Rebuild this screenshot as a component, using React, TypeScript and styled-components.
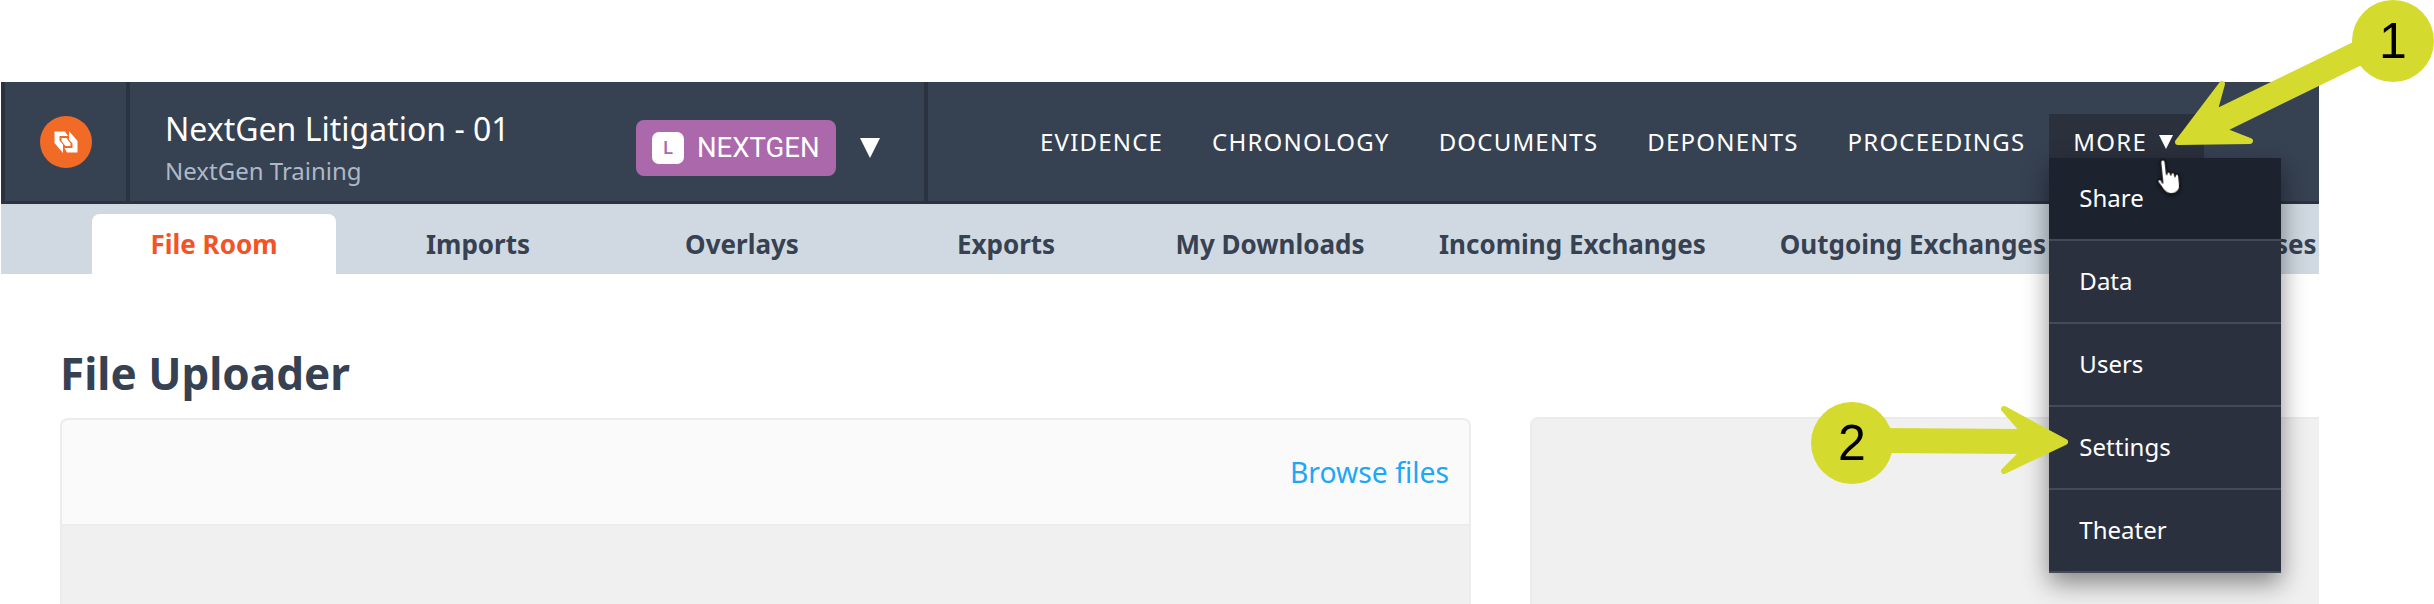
import { FC } from 'react'
import styled, { createGlobalStyle } from 'styled-components'

const navLinks = ['EVIDENCE', 'CHRONOLOGY', 'DOCUMENTS', 'DEPONENTS', 'PROCEEDINGS']
const tabs = ['File Room', 'Imports', 'Overlays', 'Exports', 'My Downloads', 'Incoming Exchanges', 'Outgoing Exchanges', 'Load Processes']
const menuItems = ['Share', 'Data', 'Users', 'Settings', 'Theater']

const App: FC = () => {
  return (
    <>
      <GlobalStyle />
      <Page>
        <Frame>
          <Header>
            <LogoCell>
              <Logo viewBox="0 0 52 52">
                <circle cx="26" cy="26" r="26" fill="#f26b26" />
                <path d="M14.5 15.5 L25 15.5 L28 20 L19.5 20 L19.5 24.5 L23 28.5 L23 37 L14.5 27 Z" fill="#fff" />
                <path d="M37.5 36.5 L27 36.5 L24.5 32 L32.5 32 L32.5 27.5 L29 23.5 L29 15 L37.5 25 Z" fill="#fff" />
                <path d="M21.5 22 L26.5 22 L30.5 27.5 L30.5 30 L25.5 30 L21.5 25 Z" fill="#fff" />
              </Logo>
            </LogoCell>
            <ProjectCell>
              <ProjectText>
                <ProjectTitle>NextGen Litigation - 01</ProjectTitle>
                <ProjectSub>NextGen Training</ProjectSub>
              </ProjectText>
              <Badge>
                <BadgeMark>L</BadgeMark>
                NEXTGEN
              </Badge>
              <Caret $size={10} $gap={24} />
            </ProjectCell>
            <Nav>
              {navLinks.map((link) => (
                <NavLink key={link}>{link}</NavLink>
              ))}
              <MoreWrap>
                <MoreButton>
                  MORE
                  <Caret $size={7} $gap={12} />
                </MoreButton>
                <Menu>
                  {menuItems.map((item, i) => (
                    <MenuItem key={item} $active={i === 0}>
                      {item}
                    </MenuItem>
                  ))}
                </Menu>
              </MoreWrap>
            </Nav>
          </Header>
          <TabBar>
            {tabs.map((tab, i) => (
              <Tab key={tab} $active={i === 0}>
                {tab}
              </Tab>
            ))}
          </TabBar>
          <Content>
            <LeftColumn>
              <Heading>File Uploader</Heading>
              <Card>
                <CardHeader>
                  <BrowseLink>Browse files</BrowseLink>
                </CardHeader>
                <CardBody />
              </Card>
            </LeftColumn>
            <SidePanel />
          </Content>
        </Frame>

        <Arrows viewBox="0 0 2434 604">
          <path
            d="M2178 142 L2222 84 L2214 113 L2352 46 L2359 63 L2222 130 L2250 141 Z"
            fill="#d5da2e"
            stroke="#d5da2e"
            strokeWidth="6"
            strokeLinejoin="round"
          />
          <path
            d="M1885 431 L2024 432 L2004 409 L2065 442 L2004 471 L2024 451 L1885 450 Z"
            fill="#d5da2e"
            stroke="#d5da2e"
            strokeWidth="6"
            strokeLinejoin="round"
          />
        </Arrows>
        <Marker $left={2352} $top={0}>1</Marker>
        <Marker $left={1811} $top={402}>2</Marker>
        <Hand viewBox="0 0 30 38">
          <path
            d="M7 24 L7 4 C7 0 12 0 12 4 L12 16 C12 13 16 13 16 16 L16 17 C16 14 20 14 20 17 L20 19 C20 16 24 16 24 19 L24 27 C24 33 20 36 15 36 C11 36 9 34 7 31 L3 24 C1 21 4 19 6 21 Z"
            fill="#fff"
            stroke="#111"
            strokeWidth="1.6"
            strokeLinejoin="round"
          />
        </Hand>
      </Page>
    </>
  )
}

const GlobalStyle = createGlobalStyle`
  html, body {
    margin: 0;
    padding: 0;
    background: #fff;
  }

  body {
    font-family: 'Noto Sans', sans-serif;
  }
`

const Page = styled.div`
  position: relative;
  width: 2434px;
  height: 604px;
  overflow: hidden;
  background: #fff;
  padding-top: 82px;
  box-sizing: border-box;
`

const Frame = styled.div`
  width: 2318px;
  height: 522px;
  margin-left: 1px;
  overflow: hidden;
  display: flex;
  flex-direction: column;
`

const Header = styled.div`
  display: flex;
  flex-shrink: 0;
  height: 119px;
  background: #364152;
  border-bottom: 3px solid #2b3240;
`

const LogoCell = styled.div`
  width: 121px;
  display: flex;
  align-items: center;
  justify-content: center;
  border-left: 4px solid #2b3240;
  border-right: 4px solid #2b3240;
`

const Logo = styled.svg`
  width: 52px;
  height: 52px;
`

const ProjectCell = styled.div`
  width: 759px;
  display: flex;
  align-items: center;
  padding: 12px 0 0 35px;
  border-right: 4px solid #2b3240;
`

const ProjectText = styled.div`
  width: 471px;
`

const ProjectTitle = styled.div`
  font-size: 32px;
  line-height: 40px;
  color: #fff;
`

const ProjectSub = styled.div`
  margin-top: 6px;
  font-size: 24px;
  line-height: 32px;
  color: #aeb8c6;
`

const Badge = styled.div`
  width: 200px;
  height: 56px;
  display: flex;
  align-items: center;
  gap: 13px;
  padding-left: 16px;
  box-sizing: border-box;
  border-radius: 8px;
  background: #ab68ab;
  color: #fff;
  font-family: Roboto, sans-serif;
  font-size: 27.5px;
`

const BadgeMark = styled.span`
  width: 32px;
  height: 32px;
  display: flex;
  align-items: center;
  justify-content: center;
  border-radius: 7px;
  background: #fff;
  color: #ab68ab;
  font-size: 18px;
  font-weight: 500;
`

const Caret = styled.span<{ $size: number; $gap: number }>`
  width: 0;
  height: 0;
  margin-left: ${(props) => props.$gap}px;
  border-left: ${(props) => props.$size}px solid transparent;
  border-right: ${(props) => props.$size}px solid transparent;
  border-top: ${(props) => props.$size * 2}px solid #fff;
`

const Nav = styled.div`
  flex: 1;
  display: flex;
  align-items: center;
  padding-left: 112px;
  gap: 49px;
  font-size: 24px;
  letter-spacing: 1.2px;
  color: #fff;
`

const NavLink = styled.span`
  white-space: nowrap;
`

const MoreWrap = styled.div`
  position: relative;
  margin: 0 0 12px -25px;
`

const MoreButton = styled.div`
  width: 155px;
  height: 44px;
  padding: 12px 0 0 24px;
  box-sizing: border-box;
  display: flex;
  align-items: center;
  background: #2b303d;
`

const Menu = styled.div`
  position: absolute;
  top: 44px;
  left: 0;
  width: 232px;
  z-index: 2;
  background: #2a303e;
  box-shadow: 0 10px 24px rgba(0, 0, 0, 0.45);
  font-size: 24px;
  letter-spacing: 0;
`

const MenuItem = styled.div<{ $active: boolean }>`
  height: 79px;
  padding: 0 0 2px 30px;
  display: flex;
  align-items: center;
  background: ${(props) => (props.$active ? '#1c222e' : '#2a303e')};
  border-bottom: 2px solid #434a5a;
  color: #fff;
`

const TabBar = styled.div`
  height: 70px;
  flex-shrink: 0;
  display: flex;
  align-items: flex-end;
  gap: 20px;
  padding-left: 91px;
  background: #d0d9e1;
  overflow: hidden;
`

const Tab = styled.div<{ $active: boolean }>`
  min-width: 244px;
  height: 60px;
  padding: 0 27px;
  box-sizing: border-box;
  flex-shrink: 0;
  display: flex;
  align-items: center;
  justify-content: center;
  border-radius: 8px 8px 0 0;
  background: ${(props) => (props.$active ? '#fff' : 'transparent')};
  color: ${(props) => (props.$active ? '#f35325' : '#364152')};
  font-size: 26px;
  font-weight: 700;
  white-space: nowrap;
`

const Content = styled.div`
  flex: 1;
  display: flex;
  gap: 59px;
  padding-left: 59px;
`

const LeftColumn = styled.div`
  width: 1411px;
  flex-shrink: 0;
`

const Heading = styled.h1`
  margin: 70px 0 0;
  height: 74px;
  font-size: 44px;
  line-height: 58px;
  font-weight: 700;
  color: #364152;
`

const Card = styled.div`
  height: 300px;
  border: 2px solid #ececec;
  border-radius: 8px 8px 0 0;
  overflow: hidden;
  background: #f0f0f0;
`

const CardHeader = styled.div`
  height: 104px;
  padding-right: 20px;
  display: flex;
  align-items: center;
  justify-content: flex-end;
  background: #fafafa;
  border-bottom: 2px solid #ececec;
`

const BrowseLink = styled.span`
  font-size: 28.3px;
  color: #1ea7f5;
`

const CardBody = styled.div`
  height: 100%;
`

const SidePanel = styled.div`
  flex: 1;
  margin-top: 143px;
  background: #f0f0f0;
  border-top: 2px solid #ebebeb;
  border-left: 2px solid #ececec;
  border-radius: 8px 0 0 0;
`

const Arrows = styled.svg`
  position: absolute;
  inset: 0;
  width: 2434px;
  height: 604px;
  z-index: 3;
  pointer-events: none;
`

const Marker = styled.div<{ $left: number; $top: number }>`
  position: absolute;
  left: ${(props) => props.$left}px;
  top: ${(props) => props.$top}px;
  z-index: 4;
  width: 82px;
  height: 82px;
  display: flex;
  align-items: center;
  justify-content: center;
  border-radius: 50%;
  background: #d5da2e;
  color: #000;
  font-family: 'Liberation Sans', sans-serif;
  font-size: 50px;
`

const Hand = styled.svg`
  position: absolute;
  left: 2155px;
  top: 158px;
  z-index: 5;
  width: 30px;
  height: 38px;
  transform: rotate(-6deg);
  filter: drop-shadow(0 2px 2px rgba(0, 0, 0, 0.4));
`

export default App
